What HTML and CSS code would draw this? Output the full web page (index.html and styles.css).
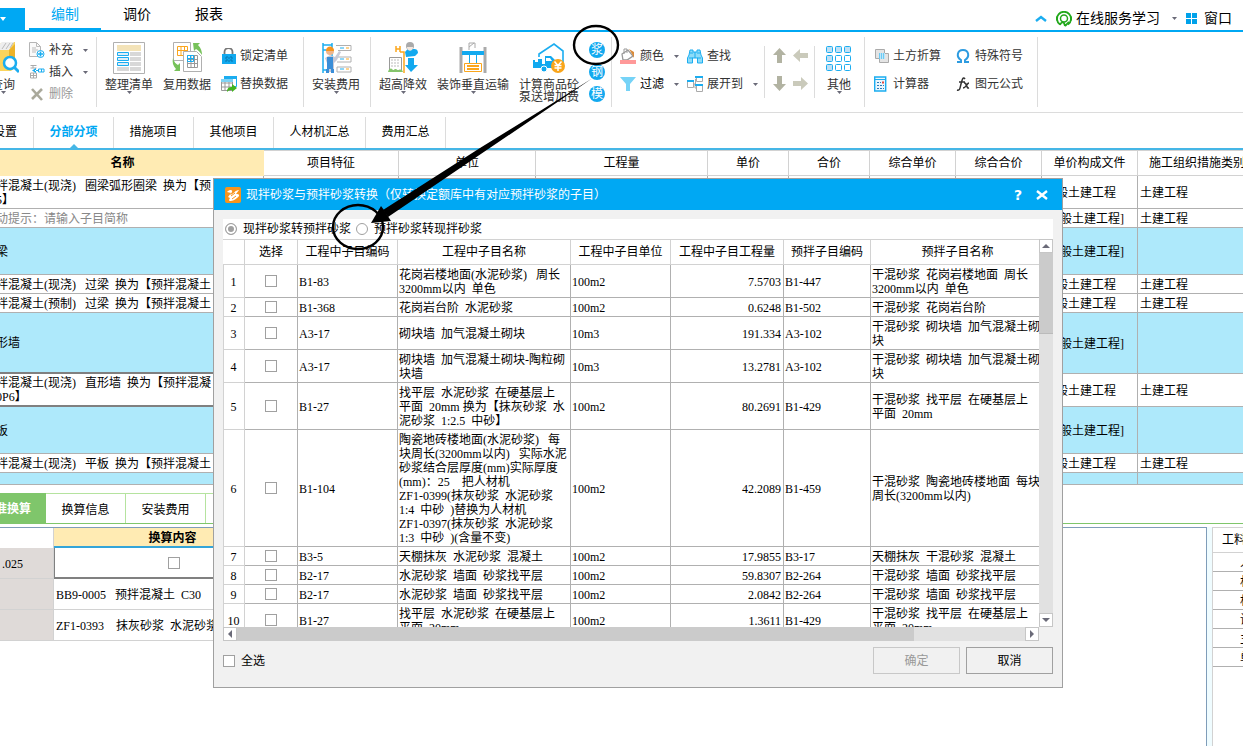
FILE: index.html
```html
<!DOCTYPE html>
<html lang="zh-CN">
<head>
<meta charset="utf-8">
<title>编制</title>
<link rel="stylesheet" href="styles.css">
</head>
<body>
<svg class="defs" width="0" height="0" aria-hidden="true">
  <symbol id="caret" viewBox="0 0 5 3"><path d="M0 0h5L2.500 3z" fill="#6a6a78"/></symbol>
</svg>

<header class="topbar">
  <button class="app-menu" aria-label="菜单"><svg width="6" height="4" viewBox="0 0 6 4"><path d="M0 0h6L3 4z" fill="#fff"/></svg></button>
  <nav class="main-tabs">
    <a href="#" class="main-tab current">编制</a>
    <a href="#" class="main-tab">调价</a>
    <a href="#" class="main-tab">报表</a>
  </nav>
  <div class="top-tools">
    <button aria-label="收起"><svg width="12" height="7" viewBox="0 0 12 7"><path d="M1 6l5-4 5 4" fill="none" stroke="#1badf0" stroke-width="2.400"/></svg></button>
    <button class="service"><svg width="16" height="16" viewBox="0 0 16 16"><path d="M4 13.500A7 7 0 1 1 12 13.500" fill="none" stroke="#23a81c" stroke-width="1.800"/><circle cx="8" cy="7.500" r="3.500" fill="none" stroke="#23a81c" stroke-width="1.500"/><path d="M1 5.500v4M15 5.500v4" stroke="#23a81c" stroke-width="2"/><path d="M4 14c1-3 3-3 4-2l1 3M9 15l4-4" fill="none" stroke="#23a81c" stroke-width="1.800"/></svg>在线服务学习<svg class="caret" width="5" height="3"><use href="#caret"/></svg></button>
    <button class="window"><svg width="11" height="11" viewBox="0 0 11 11"><path d="M0 0h5v5H0zM6 0h5v5H6zM0 6h5v5H0zM6 6h5v5H6z" fill="#00a2ea"/></svg>窗口</button>
  </div>
</header>

<div class="ribbon">
  <div class="group g-query">
    <button class="big query"><svg width="32" height="32" viewBox="0 0 32 32"><path d="M4 8L16 0h12v26l-4 3H4z" fill="#fbd45c"/><path d="M13 8V2l2-2h12l-5 8z" fill="#eee"/><path d="M15 7l4-6M19 7l4-6M23 6l3-5" stroke="#bbb" fill="none"/><path d="M22 8l6-6v24l-6 2z" fill="#edb32a"/><circle cx="23" cy="21" r="6" fill="#fff" stroke="#1badf0" stroke-width="2.500"/><path d="M27 25l5 5" stroke="#1badf0" stroke-width="3"/></svg><span>查询</span><svg class="caret" width="5" height="3"><use href="#caret"/></svg></button>
    <div class="stack three">
      <button class="small"><svg width="16" height="16" viewBox="0 0 16 16"><path d="M.5.5h7l4 4v10H.5z" fill="#fafafa" stroke="#b5b5b5"/><path d="M7.500.5v4h4M3 6h4M3 8h6M3 10h4" fill="none" stroke="#bbb"/><circle cx="11.500" cy="12" r="3.500" fill="#fff" stroke="#1badf0"/><path d="M9 12h5M11.500 9.500v5" stroke="#1badf0" stroke-width="1.500"/></svg><span>补充</span><svg class="caret" width="5" height="3"><use href="#caret"/></svg></button>
      <button class="small"><svg width="16" height="16" viewBox="0 0 16 16"><path d="M1.500 1.500h6M1.500 4h6M1.500 9h6v5h-6zM1.500 11.500h6M4.500 9v5M4 1v3" fill="none" stroke="#aaa"/><path d="M7 4L3 6.500 7 9zM6 6h4v1H6z" fill="#1badf0"/><path d="M9.500 5h5.500v3H9.500zM12.500 5v3" fill="none" stroke="#1badf0"/></svg><span>插入</span><svg class="caret" width="5" height="3"><use href="#caret"/></svg></button>
      <button class="small off"><svg width="16" height="16" viewBox="0 0 16 16"><path d="M3 3l10 11M13 3L3 13" stroke="#aaa99b" stroke-width="2.600"/></svg><span>删除</span></button>
    </div>
  </div>
  <div class="sep"></div>
  <div class="group g-list">
    <button class="big"><svg width="32" height="32" viewBox="0 0 32 32"><path d="M.5.5h31v31H.5z" fill="#fff" stroke="#b0b0b0"/><path d="M4 3h24v6H4z" fill="#f3e3b8"/><path d="M17 10h11v4H17zM17 15h11v4H17zM17 20h11v4H17zM17 25h11v4H17zM4 25h12v4H4z" fill="#d8d8d8"/><path d="M4.500 10.500h11v3h-11zM4.500 15.500h11v3h-11zM4.500 20.500h11v3h-11z" fill="#ddeef8" stroke="#1badf0"/></svg><span>整理清单</span><svg class="caret" width="5" height="3"><use href="#caret"/></svg></button>
    <button class="big"><svg width="32" height="32" viewBox="0 0 32 32"><path d="M2.500.5h17v18h-17z" fill="#fff" stroke="#b0b0b0"/><path d="M6.500 4.500h10v9h-10zM6.500 8.500h10M10 4.500v9M13.500 4.500v9" fill="none" stroke="#fba61c"/><path d="M12.500 9.500h13l5 5v15h-18z" fill="#fff" stroke="#b0b0b0"/><path d="M16.500 13.500h10v12h-10zM16.500 17.500h10M16.500 21.500h10M20 13.500v12M23.500 13.500v12" fill="none" stroke="#999"/><path d="M16.500 13.500h6v6h-6zM16.500 16.500h6M19.500 13.500v6" fill="none" stroke="#1badf0"/><path d="M22 1h7l-2 2c3 3 4 6 4 10-2-3-4-5-6-6l-2 2zM2 16c1 4 3 6 5 7l2-2v8H3l2-2c-3-3-4-7-3-11z" fill="#77c25a"/></svg><span>复用数据</span></button>
    <div class="stack two">
      <button class="small"><svg width="16" height="16" viewBox="0 0 16 16"><path d="M3.500 7V4a4 4 0 0 1 8 0v3" fill="none" stroke="#777" stroke-width="1.800"/><path d="M1 6h14v10H1z" fill="#12a9ef"/><path d="M4 10h8M4 13h8M6 8v6M10 8v6" stroke="#0877ae" stroke-dasharray="2 1"/></svg><span>锁定清单</span></button>
      <button class="small"><svg width="16" height="16" viewBox="0 0 16 16"><path d="M3.500.5h12v10h-12z" fill="#fff" stroke="#1badf0"/><path d="M3 0h13v3H3z" fill="#1badf0"/><path d="M.5 3.500h11v11H.5zM.5 7h11M.5 11h11M4 3.500v11M8 3.500v11" fill="#fff" stroke="#999"/><path d="M0 3h12v3H0z" fill="#7fd3f5"/><path d="M6 16c0-4 2-5 5-5V8l5 4-5 4v-2c-2 0-3 0-5 2z" fill="#42b51f"/></svg><span>替换数据</span></button>
    </div>
  </div>
  <div class="sep"></div>
  <div class="group g-fee">
    <button class="big"><svg width="32" height="32" viewBox="0 0 32 32"><path d="M3 1v30M12 1v30M3 3h9M3 28h9M3 8h5" fill="none" stroke="#1badf0" stroke-width="1.500"/><path d="M16 3.500h15v5H18M18 15h13v5H17M17 25h14v5H17z" fill="#fff" stroke="#b0b0b0"/><path d="M20 6h4M20 17h4M20 27h4" stroke="#1badf0"/><path d="M26 6h3M26 17h3M26 27h3" stroke="#fba61c"/><circle cx="10" cy="9" r="4" fill="#efb58c"/><path d="M6 9c0-6 8-6 8 0z" fill="#f7941d"/><path d="M5 16l5-3 5 2 4-6 2 1-4 8-3 3v9H7v-9z" fill="#c9c9d6"/><path d="M7 15h6v12h1v4h-3v-4H9v4H6v-4h1z" fill="#3a8ed8"/></svg><span>安装费用</span><svg class="caret" width="5" height="3"><use href="#caret"/></svg></button>
  </div>
  <div class="sep"></div>
  <div class="group g-measure">
    <button class="big"><svg width="32" height="32" viewBox="0 0 32 32"><path d="M9 4v6M13 4v6M9 7h4M13 10h4v21" fill="none" stroke="#fba61c" stroke-width="1.500"/><path d="M2.500 15.500h12v13h-12z" fill="#fff" stroke="#999"/><path d="M4 18h9M4 21h9M4 24h9" stroke="#bbb" stroke-dasharray="2 1"/><path d="M1 30c1-5 5-4 5-1 2-3 4-2 5 0 1-2 4-2 5 1z" fill="#84c66a"/><path d="M18 10c3-4 3-3 6-3s7-1 7 4l-3 3-9 1z" fill="#12a9ef"/><circle cx="23" cy="4" r="4" fill="#aaa"/><path d="M20 5h6c0 5-6 5-6 0z" fill="#f1e7df"/><path d="M21 16h6v7h4l-7 7-6-7h3z" fill="#12a9ef"/></svg><span>超高降效</span><svg class="caret" width="5" height="3"><use href="#caret"/></svg></button>
    <button class="big"><svg width="32" height="32" viewBox="0 0 32 32"><path d="M4 5v26M28 5v26" stroke="#aaa" stroke-width="3"/><path d="M12 8V1h6v5M12 5l5-4" fill="none" stroke="#aaa"/><path d="M5 9h22v4H5zM12 13h1v8h-1zM19 13h1v8h-1z" fill="#12a9ef"/><path d="M7.500 21.500h17v8h-17z" fill="#fff" stroke="#fba61c"/><path d="M10 24h12M10 27h12" stroke="#fba61c" stroke-width="2"/></svg><span>装饰垂直运输</span><svg class="caret" width="5" height="3"><use href="#caret"/></svg></button>
    <button class="big"><svg width="32" height="32" viewBox="0 0 32 32"><path d="M6 15v-3L21 2l9 7v12" fill="none" stroke="#1badf0" stroke-width="1.600"/><path d="M0 18h2v2h3v-3h4v5h3v-8h6l4 4v8H0z" fill="#12a9ef"/><path d="M13 16h4l2 3h-6z" fill="#fff"/><circle cx="11" cy="27" r="3" fill="#12a9ef" stroke="#fff"/><circle cx="25" cy="24" r="7" fill="#f9a51a"/><path d="M21.500 19.500l3.500 4 3.500-4M25 23v6M21.500 23.500h7M21.500 26h7" fill="none" stroke="#fff" stroke-width="1.500"/></svg><span>计算商品砼<br>泵送增加费</span></button>
    <div class="stack three rounds">
      <button class="round">浆</button>
      <button class="round">钢</button>
      <button class="round">模</button>
    </div>
  </div>
  <div class="sep"></div>
  <div class="group g-find">
    <div class="stack two">
      <button class="small"><svg width="16" height="16" viewBox="0 0 16 16"><path d="M2 6l6-4 5 6-6 4H3z" fill="#fff" stroke="#999" stroke-width="1.300"/><path d="M4 6V1h3v4" fill="none" stroke="#999"/><path d="M9 1l5 3v6l-2-4z" fill="#d98b3c"/><path d="M0 12h16v4H0z" fill="#f99"/></svg><span>颜色</span><svg class="caret" width="5" height="3"><use href="#caret"/></svg></button>
      <button class="small strong"><svg width="16" height="16" viewBox="0 0 16 16"><path d="M0 1h16l-6 7v7H6V8z" fill="#76d3f7"/></svg><span>过滤</span><svg class="caret" width="5" height="3"><use href="#caret"/></svg></button>
    </div>
    <div class="stack two">
      <button class="small"><svg width="16" height="16" viewBox="0 0 16 16"><path d="M3 2h3v2h4V2h3l1 5 1.500 3v5h-5v-5h-5v5h-5v-5L2 7z" fill="#8edcf8" stroke="#1badf0"/><path d="M3 5h3M10 5h3M2 10h4M10 10h4M8 4v6" stroke="#1badf0"/></svg><span>查找</span></button>
      <button class="small wide"><svg width="16" height="16" viewBox="0 0 16 16"><path d="M.5 4.500h6v7h-6zM9.500.5h6v5h-6zM9.500 9.500h6v6h-6zM6.500 8h2V3h1M8 8v4h1" fill="#fff" stroke="#aaa"/><path d="M0 4h7v2H0zM8 0h8v2H8zM8 8h8v2H8z" fill="#1badf0"/></svg><span>展开到</span><svg class="caret" width="5" height="3"><use href="#caret"/></svg></button>
    </div>
  </div>
  <div class="sep short"></div>
  <div class="group g-move">
    <button aria-label="上移"><svg width="16" height="16" viewBox="0 0 16 16"><path d="M7.500 0l6.500 7h-4v8H5V7H1z" fill="#b2b3a2"/></svg></button>
    <button aria-label="左移"><svg width="16" height="16" viewBox="0 0 16 16"><path d="M0 7.500L7 1v4h8v5H7v4z" fill="#cacabb"/></svg></button>
    <button aria-label="下移"><svg width="16" height="16" viewBox="0 0 16 16"><path d="M7.500 15L14 8h-4V0H5v8H1z" fill="#b2b3a2"/></svg></button>
    <button aria-label="右移"><svg width="16" height="16" viewBox="0 0 16 16"><path d="M15 7.500L8 1v4H0v5h8v4z" fill="#cacabb"/></svg></button>
  </div>
  <div class="sep short"></div>
  <div class="group g-other">
    <button class="big"><svg width="32" height="32" viewBox="0 0 32 32"><g fill="#bfe0f5" stroke="#1badf0"><rect x="3.500" y="4.500" width="6" height="6" rx="1"/><rect x="12.500" y="4.500" width="6" height="6" rx="1"/><rect x="21.500" y="4.500" width="6" height="6" rx="1"/><rect x="3.500" y="13.500" width="6" height="6" rx="1"/><rect x="3.500" y="22.500" width="6" height="6" rx="1"/></g><g fill="#fff" stroke="#1badf0"><rect x="12.500" y="13.500" width="6" height="6" rx="1"/><rect x="21.500" y="13.500" width="6" height="6" rx="1"/><rect x="12.500" y="22.500" width="6" height="6" rx="1"/><rect x="21.500" y="22.500" width="6" height="6" rx="1"/></g></svg><span>其他</span><svg class="caret" width="5" height="3"><use href="#caret"/></svg></button>
  </div>
  <div class="sep"></div>
  <div class="group g-calc">
    <div class="stack two">
      <button class="small"><svg width="16" height="16" viewBox="0 0 16 16"><path d="M1.500 1.500h9v9h-9zM5.500 5.500h9v9h-9z" fill="#e4e4e4" stroke="#aaa"/><path d="M5 5h6v6H5z" fill="#bfe6f7"/><path d="M5 6h6M5 8h6M5 10h6" stroke="#1badf0" stroke-dasharray="1 1"/></svg><span>土方折算</span></button>
      <button class="small"><svg width="16" height="16" viewBox="0 0 16 16"><path d="M.7 1h11v14H.7z" fill="#eaf6fd" stroke="#1badf0" stroke-width="1.400"/><path d="M.5 3.500h11" stroke="#1badf0"/><path d="M3 6.500h4M3 9.500h7M3 12.500h7" stroke="#2b7bb9" stroke-dasharray="2 1"/><path d="M8 5.500h2v2H8z" fill="#e8483f"/></svg><span>计算器</span></button>
    </div>
    <div class="stack two">
      <button class="small"><svg width="16" height="16" viewBox="0 0 16 16"><path d="M1 14h4v-2C0 9 1 2 7 2s7 7 2 10v2h4" fill="none" stroke="#2d9be0" stroke-width="2"/></svg><span>特殊符号</span></button>
      <button class="small"><svg width="16" height="16" viewBox="0 0 16 16"><path d="M9 3C7 0 6 4 5 8s-1 7-4 6M3 6h6M8 7c3-1 2 6 5 5M13 7c-2 0-3 5-6 5" fill="none" stroke="#333" stroke-width="1.500"/></svg><span>图元公式</span></button>
    </div>
  </div>
  <div class="sep"></div>
</div>

<nav class="sub-tabs">
  <a href="#" class="sub-tab first">设置</a>
  <a href="#" class="sub-tab current">分部分项</a>
  <a href="#" class="sub-tab">措施项目</a>
  <a href="#" class="sub-tab">其他项目</a>
  <a href="#" class="sub-tab wide">人材机汇总</a>
  <a href="#" class="sub-tab">费用汇总</a>
</nav>

<main class="work">
  <table class="items">
    <colgroup><col class="c-name"><col class="c-feature"><col class="c-unit"><col class="c-amount"><col class="c-price"><col class="c-price"><col class="c-total"><col class="c-total"><col class="c-file"><col></colgroup>
    <thead><tr><th class="picked">名称</th><th>项目特征</th><th>单位</th><th>工程量</th><th>单价</th><th>合价</th><th>综合单价</th><th>综合合价</th><th>单价构成文件</th><th>施工组织措施类别</th></tr></thead>
    <tbody>
      <tr class="h2"><td>拌混凝土(现浇)   圈梁弧形圈梁  换为【预
5】</td><td></td><td></td><td></td><td></td><td></td><td></td><td></td><td>一般土建工程</td><td>土建工程</td></tr>
      <tr class="h1"><td class="hint">动提示：请输入子目简称</td><td></td><td></td><td></td><td></td><td></td><td></td><td></td><td>[一般土建工程]</td><td>土建工程</td></tr>
      <tr class="h3 blue"><td>梁</td><td></td><td></td><td></td><td></td><td></td><td></td><td></td><td>[一般土建工程]</td><td></td></tr>
      <tr class="h1"><td>拌混凝土(现浇)   过梁  换为【预拌混凝土</td><td></td><td></td><td></td><td></td><td></td><td></td><td></td><td>一般土建工程</td><td>土建工程</td></tr>
      <tr class="h1"><td>拌混凝土(预制)   过梁  换为【预拌混凝土</td><td></td><td></td><td></td><td></td><td></td><td></td><td></td><td>一般土建工程</td><td>土建工程</td></tr>
      <tr class="h4 blue"><td class="edge">形墙</td><td></td><td></td><td></td><td></td><td></td><td></td><td></td><td>[一般土建工程]</td><td></td></tr>
      <tr class="h2"><td class="edge">拌混凝土(现浇)   直形墙  换为【预拌混凝
0P6】</td><td></td><td></td><td></td><td></td><td></td><td></td><td></td><td>一般土建工程</td><td>土建工程</td></tr>
      <tr class="h3 blue"><td>板</td><td></td><td></td><td></td><td></td><td></td><td></td><td></td><td>[一般土建工程]</td><td></td></tr>
      <tr class="h1"><td>拌混凝土(现浇)   平板  换为【预拌混凝土</td><td></td><td></td><td></td><td></td><td></td><td></td><td></td><td>一般土建工程</td><td>土建工程</td></tr>
      <tr class="h0 blue"><td></td><td></td><td></td><td></td><td></td><td></td><td></td><td></td><td></td><td></td></tr>
    </tbody>
  </table>

  <nav class="detail-tabs">
    <a href="#" class="detail-tab current">准换算</a>
    <a href="#" class="detail-tab">换算信息</a>
    <a href="#" class="detail-tab">安装费用</a>
    <a href="#" class="detail-tab" aria-label="更多"></a>
  </nav>

  <div class="detail">
    <section class="convert">
      <table class="convert-table">
        <colgroup><col class="c-key"><col class="c-content"></colgroup>
        <thead><tr><th></th><th class="picked">换算内容</th></tr></thead>
        <tbody>
          <tr><td class="key">.025</td><td class="active"><input type="checkbox" aria-label="换算"></td></tr>
          <tr><td class="key"></td><td>BB9-0005   预拌混凝土  C30</td></tr>
          <tr><td class="key"></td><td>ZF1-0393    抹灰砂浆  水泥砂浆</td></tr>
        </tbody>
      </table>
    </section>
    <aside class="labor">
      <h2>工料机</h2>
      <ul><li>人</li><li>材</li><li>机</li><li>设</li><li>主</li><li>单</li></ul>
    </aside>
  </div>
</main>

<section class="dialog" role="dialog" aria-labelledby="dialog-title">
  <header class="dialog-head">
    <svg width="16" height="16" viewBox="0 0 16 16"><rect width="16" height="16" rx="2" fill="#f7941d"/><path d="M2 5c3-3 6-2 5 0L5 8c4-1 5-5 9-5l-3 4c4 0 4 2 1 4-3 3-8 4-8 2l1-2-2-1 3-4z" fill="#fff"/><path d="M6 9l4-3M7 12l4-3" stroke="#f7941d"/></svg>
    <h1 id="dialog-title">现拌砂浆与预拌砂浆转换（仅转换定额库中有对应预拌砂浆的子目）</h1>
    <button class="help" aria-label="帮助">?</button>
    <button class="close" aria-label="关闭"><svg width="12" height="10" viewBox="0 0 12 10"><path d="M1 1l10 8M11 1L1 9" stroke="#fff" stroke-width="2.400"/></svg></button>
  </header>
  <div class="dialog-body">
    <div class="modes">
      <label><input type="radio" name="mode" checked><span>现拌砂浆转预拌砂浆</span></label>
      <label><input type="radio" name="mode"><span>预拌砂浆转现拌砂浆</span></label>
    </div>
    <div class="grid-box">
      <div class="grid-view">
        <table class="mortar">
          <colgroup><col class="m-no"><col class="m-pick"><col class="m-code"><col class="m-name"><col class="m-unit"><col class="m-qty"><col class="m-pcode"><col class="m-pname"></colgroup>
          <thead><tr><th></th><th>选择</th><th>工程中子目编码</th><th>工程中子目名称</th><th>工程中子目单位</th><th>工程中子目工程量</th><th>预拌子目编码</th><th>预拌子目名称</th></tr></thead>
          <tbody>
            <tr class="h2"><td>1</td><td><input type="checkbox" aria-label="选择 1"></td><td>B1-83</td><td>花岗岩楼地面(水泥砂浆)   周长
3200mm以内  单色</td><td>100m2</td><td>7.5703</td><td>B1-447</td><td>干混砂浆  花岗岩楼地面  周长
3200mm以内  单色</td></tr>
            <tr class="h1"><td>2</td><td><input type="checkbox" aria-label="选择 2"></td><td>B1-368</td><td>花岗岩台阶  水泥砂浆</td><td>100m2</td><td>0.6248</td><td>B1-502</td><td>干混砂浆  花岗岩台阶</td></tr>
            <tr class="h2"><td>3</td><td><input type="checkbox" aria-label="选择 3"></td><td>A3-17</td><td>砌块墙  加气混凝土砌块</td><td>10m3</td><td>191.334</td><td>A3-102</td><td>干混砂浆  砌块墙  加气混凝土砌
块</td></tr>
            <tr class="h2"><td>4</td><td><input type="checkbox" aria-label="选择 4"></td><td>A3-17</td><td>砌块墙  加气混凝土砌块-陶粒砌
块墙</td><td>10m3</td><td>13.2781</td><td>A3-102</td><td>干混砂浆  砌块墙  加气混凝土砌
块</td></tr>
            <tr class="h3"><td>5</td><td><input type="checkbox" aria-label="选择 5"></td><td>B1-27</td><td>找平层  水泥砂浆  在硬基层上
平面  20mm 换为【抹灰砂浆  水
泥砂浆  1:2.5  中砂】</td><td>100m2</td><td>80.2691</td><td>B1-429</td><td>干混砂浆  找平层  在硬基层上
平面  20mm</td></tr>
            <tr class="h8"><td>6</td><td><input type="checkbox" aria-label="选择 6"></td><td>B1-104</td><td>陶瓷地砖楼地面(水泥砂浆)   每
块周长(3200mm以内)   实际水泥
砂浆结合层厚度(mm)实际厚度
(mm)：25    把人材机
ZF1-0399(抹灰砂浆  水泥砂浆
1:4  中砂  )替换为人材机
ZF1-0397(抹灰砂浆  水泥砂浆
1:3  中砂  )(含量不变)</td><td>100m2</td><td>42.2089</td><td>B1-459</td><td>干混砂浆  陶瓷地砖楼地面  每块
周长(3200mm以内)</td></tr>
            <tr class="h1"><td>7</td><td><input type="checkbox" aria-label="选择 7"></td><td>B3-5</td><td>天棚抹灰  水泥砂浆  混凝土</td><td>100m2</td><td>17.9855</td><td>B3-17</td><td>天棚抹灰  干混砂浆  混凝土</td></tr>
            <tr class="h1"><td>8</td><td><input type="checkbox" aria-label="选择 8"></td><td>B2-17</td><td>水泥砂浆  墙面  砂浆找平层</td><td>100m2</td><td>59.8307</td><td>B2-264</td><td>干混砂浆  墙面  砂浆找平层</td></tr>
            <tr class="h1"><td>9</td><td><input type="checkbox" aria-label="选择 9"></td><td>B2-17</td><td>水泥砂浆  墙面  砂浆找平层</td><td>100m2</td><td>2.0842</td><td>B2-264</td><td>干混砂浆  墙面  砂浆找平层</td></tr>
            <tr class="h2"><td>10</td><td><input type="checkbox" aria-label="选择 10"></td><td>B1-27</td><td>找平层  水泥砂浆  在硬基层上
平面  20mm</td><td>100m2</td><td>1.3611</td><td>B1-429</td><td>干混砂浆  找平层  在硬基层上
平面  20mm</td></tr>
          </tbody>
        </table>
      </div>
      <div class="vbar">
        <button aria-label="向上"><svg width="8" height="4" viewBox="0 0 8 4"><path d="M0 4h8L4 0z" fill="#6a6a78"/></svg></button>
        <div class="vthumb"></div>
        <button class="end" aria-label="向下"><svg width="8" height="4" viewBox="0 0 8 4"><path d="M0 0h8L4 4z" fill="#6a6a78"/></svg></button>
      </div>
      <div class="hbar">
        <button aria-label="向左"><svg width="4" height="8" viewBox="0 0 4 8"><path d="M4 0v8L0 4z" fill="#6a6a78"/></svg></button>
        <div class="hthumb"></div>
        <button class="end" aria-label="向右"><svg width="4" height="8" viewBox="0 0 4 8"><path d="M0 0v8l4-4z" fill="#6a6a78"/></svg></button>
      </div>
    </div>
    <footer class="dialog-foot">
      <label><input type="checkbox"><span>全选</span></label>
      <div class="actions"><button disabled>确定</button><button>取消</button></div>
    </footer>
  </div>
</section>

<svg class="marks" width="640" height="260" viewBox="0 0 640 260" aria-hidden="true">
  <ellipse cx="596" cy="45" rx="22" ry="19" fill="none" stroke="#000" stroke-width="2.400"/>
  <ellipse cx="358" cy="227" rx="25" ry="22" fill="none" stroke="#000" stroke-width="2.400"/>
  <path d="M592 78.500L540 114 388 217l-5-7L480 148l60-37z"/>
  <path d="M371 223l10-17 3 4 7 11z"/>
</svg>
</body>
</html>
```
FILE: styles.css
```css
* { box-sizing: border-box; }

body {
  margin: 0;
  min-height: 100vh;
  display: flex;
  flex-direction: column;
  overflow: hidden;
  position: relative;
  background: #fff;
  color: #000;
  font: 12px/14px "Liberation Serif", "Noto Sans CJK SC", sans-serif;
  white-space: nowrap;
}

button {
  margin: 0;
  padding: 0;
  border: 0;
  background: none;
  color: inherit;
  font: inherit;
}

a { color: inherit; text-decoration: none; }
svg { flex: none; display: block; }
.defs { position: absolute; }

input { appearance: none; margin: 0; flex: none; border: 1px solid #a0a0a0; background: #fff; }
input[type="checkbox"] { display: block; width: 12px; height: 12px; }
input[type="radio"] { width: 12px; height: 12px; border-radius: 50%; }
input[type="radio"]:checked { background: #a0a0a0; box-shadow: inset 0 0 0 2px #fff; }

/* top bar */
.topbar {
  display: flex;
  align-items: flex-end;
  height: 32px;
  border-bottom: 2px solid #00a8f3;
  font-size: 14px;
}
.app-menu {
  width: 25px;
  height: 22px;
  background: #00a8f3;
}
.main-tabs { display: flex; margin-left: 4px; }
.main-tab {
  width: 72px;
  height: 30px;
  line-height: 30px;
  text-align: center;
}
.main-tab.current { color: #00a8f3; border-bottom: 2px solid #00a8f3; }
.top-tools {
  display: flex;
  align-items: center;
  height: 23px;
  margin-left: auto;
  padding-right: 11px;
  gap: 9px;
}
.top-tools button { display: flex; align-items: center; gap: 4px; }
.top-tools .caret { margin-left: 8px; }
.top-tools .window { gap: 7px; }

/* ribbon */
.ribbon {
  display: flex;
  height: 81px;
  padding-top: 5px;
  border-bottom: 1px solid #dcdcdc;
  color: #333;
}
.group { display: flex; flex: none; }
.sep { flex: none; width: 1px; height: 70px; background: #dcdcdc; }
.sep.short { height: 52px; margin-top: 9px; }
.big {
  display: flex;
  flex-direction: column;
  align-items: center;
  height: 68px;
  padding-top: 5px;
}
.big span { margin-top: 5px; line-height: 12px; }
.stack.two { padding-top: 5px; }
.stack.three { padding-top: 2px; }
.small { display: flex; align-items: center; height: 28px; }
.stack.three .small { height: 22px; }
.small span { margin-left: 3px; }
.small .caret { margin-left: 10px; }
.small.off { color: #999; }
.small.strong { color: #000; }
.g-query { width: 96px; }
.g-query .big { width: 32px; margin: 0 10px 0 -13px; }
.g-query .small span, .g-find .small span { margin-left: 4px; }
.g-list { width: 206px; padding-left: 8px; gap: 10px; }
.g-fee { width: 66px; padding-left: 8px; }
.g-measure { width: 240px; padding-left: 8px; gap: 10px; }
.round {
  display: block;
  width: 16px;
  height: 16px;
  margin: 3px 0 6px;
  border-radius: 50%;
  background: #12a9ef;
  color: #fff;
  line-height: 16px;
}
.g-find { width: 152px; padding-left: 8px; gap: 8px; }
.g-move {
  display: grid;
  grid-template-columns: 21px 21px;
  grid-template-rows: 28px 28px;
  width: 49px;
  padding: 5px 0 0 7px;
  align-items: center;
}
.g-other { width: 49px; padding-left: 8px; }
.g-calc { width: 172px; padding-left: 9px; gap: 15px; }

/* page tabs */
.sub-tabs {
  display: flex;
  height: 37px;
  padding-top: 4px;
  border-bottom: 2px solid #45b6e6;
}
.sub-tab {
  position: relative;
  width: 80px;
  border-right: 1px solid #dcdcdc;
  line-height: 31px;
  text-align: center;
}
.sub-tab.first { width: 34px; padding-right: 16px; direction: rtl; text-align: right; }
.sub-tab.wide { width: 92px; }
.sub-tab.current { color: #00a8f3; font-weight: bold; }
.sub-tab.current::after {
  content: "";
  position: absolute;
  bottom: 0;
  left: 36px;
  border: 4px solid transparent;
  border-top: 0;
  border-bottom-color: #45b6e6;
}

/* item table */
.work { display: flex; flex-direction: column; flex: 1; }
table { table-layout: fixed; border-collapse: separate; border-spacing: 0; }
th, td { padding: 0; font-weight: normal; overflow: hidden; white-space: pre; }
.items { width: calc(100% + 18px); margin-left: -4px; }
.items th {
  height: 26px;
  border: solid #d2d2d2;
  border-width: 1px 1px 1px 0;
}
th.picked { background: #ffebb3; font-weight: bold; }
.items th.picked { padding-right: 14px; border-color: #ffebb3; }
.items td {
  padding: 1px 2px 0;
  border: solid #b0b0b0;
  border-width: 0 1px 1px 0;
}
.items td:first-child { padding: 1px 0 0; }
.items .hint { color: #888; }
.items td.edge { border-bottom: 2px solid #808080; }
.blue td { background: #aee9fb; }
.c-name { width: 268px; }
.c-feature { width: 135px; }
.c-unit { width: 137px; }
.c-amount { width: 172px; }
.c-price { width: 81px; }
.c-total { width: 86px; }
.c-file { width: 96px; }
.h0 { height: 12px; }
.h1 { height: 19px; }
.h2 { height: 33px; }
.h3 { height: 47px; }
.h4 { height: 61px; }
.h8 { height: 117px; }

/* lower panel */
.detail-tabs {
  display: flex;
  height: 31px;
  margin-top: 8px;
  border-bottom: 1px solid #7fc66b;
}
.detail-tab {
  width: 80px;
  border: solid #b5e39f;
  border-width: 1px 1px 0 0;
  line-height: 32px;
  text-align: center;
}
.detail-tab.current {
  width: 46px;
  padding-right: 14px;
  border-color: #7fc66b;
  background: #7fc66b;
  color: #fff;
  font-weight: bold;
  line-height: 31px;
  direction: rtl;
  text-align: right;
}
.detail { display: flex; flex: 1; margin-top: 3px; background: #effcff; }
.convert {
  flex: 1;
  border: solid #7f9db9;
  border-width: 1px 1px 0 0;
  background: #fff;
}
.convert-table { width: 292px; }
.c-key { width: 54px; }
.c-content { width: 238px; }
.convert-table th { height: 20px; padding-top: 1px; border-right: 1px solid #d2d2d2; }
.convert-table th.picked { border-bottom: 2px solid #34a5d9; }
.convert-table td {
  height: 31px;
  padding: 1px 0 0 2px;
  border: solid #d2d2d2;
  border-width: 0 1px 1px 0;
}
.convert-table .key { background: #dfdad8; }
.convert-table .active { border: solid #808080; border-width: 0 2px 2px 1px; }
.active input { margin: 0 auto; }
.labor {
  width: 31px;
  margin-left: 5px;
  overflow: hidden;
  border: solid #d2d2d2;
  border-width: 1px 0 0 1px;
  background: #fff;
}
.labor h2 {
  margin: 0;
  height: 25px;
  padding-left: 9px;
  border-bottom: 1px solid #d2d2d2;
  font: inherit;
  line-height: 25px;
}
.labor ul { margin: 0; padding: 0; list-style: none; }
.labor li {
  height: 19px;
  padding-left: 27px;
  border-bottom: 1px solid #b0b0b0;
  line-height: 20px;
}

/* conversion dialog */
.dialog {
  position: absolute;
  left: 213px;
  top: 178px;
  width: 850px;
  border: 1px solid #a0a0a0;
  background: #f1f1f1;
}
.dialog-head {
  display: flex;
  align-items: center;
  height: 31px;
  padding: 0 14px 0 11px;
  background: #00a8f3;
  color: #fff;
}
.dialog-head h1 { flex: 1; margin: 0 0 0 5px; font: inherit; }
.help { width: 12px; margin-right: 12px; font: bold 14px/16px "DejaVu Sans", sans-serif; }
.dialog-body { padding: 9px; }
.modes {
  display: flex;
  height: 20px;
  padding-left: 2px;
  gap: 5px;
  background: #fff;
}
.modes label, .dialog-foot label { display: flex; align-items: center; gap: 6px; }
.grid-box {
  display: grid;
  grid-template-columns: 1fr 14px;
  grid-template-rows: 388px 14px;
}
.grid-view { overflow: hidden; background: #fff; }
.mortar { width: 822px; }
.mortar th {
  height: 26px;
  border: solid #d2d2d2;
  border-width: 1px 1px 1px 0;
  text-align: center;
}
.mortar td {
  padding: 1px 2px 0 1px;
  border: solid #b0b0b0;
  border-width: 0 1px 1px 0;
}
.mortar td:first-child {
  border-color: #d2d2d2;
  border-left-width: 1px;
  text-align: center;
}
.mortar td:nth-child(2) { padding-top: 0; }
.mortar td:nth-child(6) { text-align: right; }
.mortar td input { margin: 0 auto; }
.m-no { width: 22px; }
.m-pick { width: 53px; }
.m-code { width: 100px; }
.m-name { width: 173px; }
.m-unit { width: 100px; }
.m-qty { width: 113px; }
.m-pcode { width: 87px; }
.m-pname { width: 174px; }
.vbar, .hbar { display: flex; background: #e1e1e1; }
.vbar { flex-direction: column; }
.vbar button, .hbar button {
  display: flex;
  align-items: center;
  justify-content: center;
  width: 14px;
  height: 14px;
  border: 1px solid #c6c6c6;
  background: #fff;
}
.vbar .end { margin-top: auto; }
.hbar .end { margin-left: auto; }
.vthumb { height: 21%; background: #cbcbcb; border-bottom: 1px solid #bbb; }
.hthumb { width: 83%; background: #cbcbcb; }
.dialog-foot {
  display: flex;
  align-items: center;
  justify-content: space-between;
  padding: 6px 0 4px;
}
.actions { display: flex; gap: 6px; }
.actions button { width: 87px; height: 27px; border: 1px solid #a0a0a0; }
.actions button:disabled { border-color: #c8c8c8; color: #999; }

/* hand-drawn pointer marks */
.marks { position: absolute; left: 0; top: 0; pointer-events: none; }
```
